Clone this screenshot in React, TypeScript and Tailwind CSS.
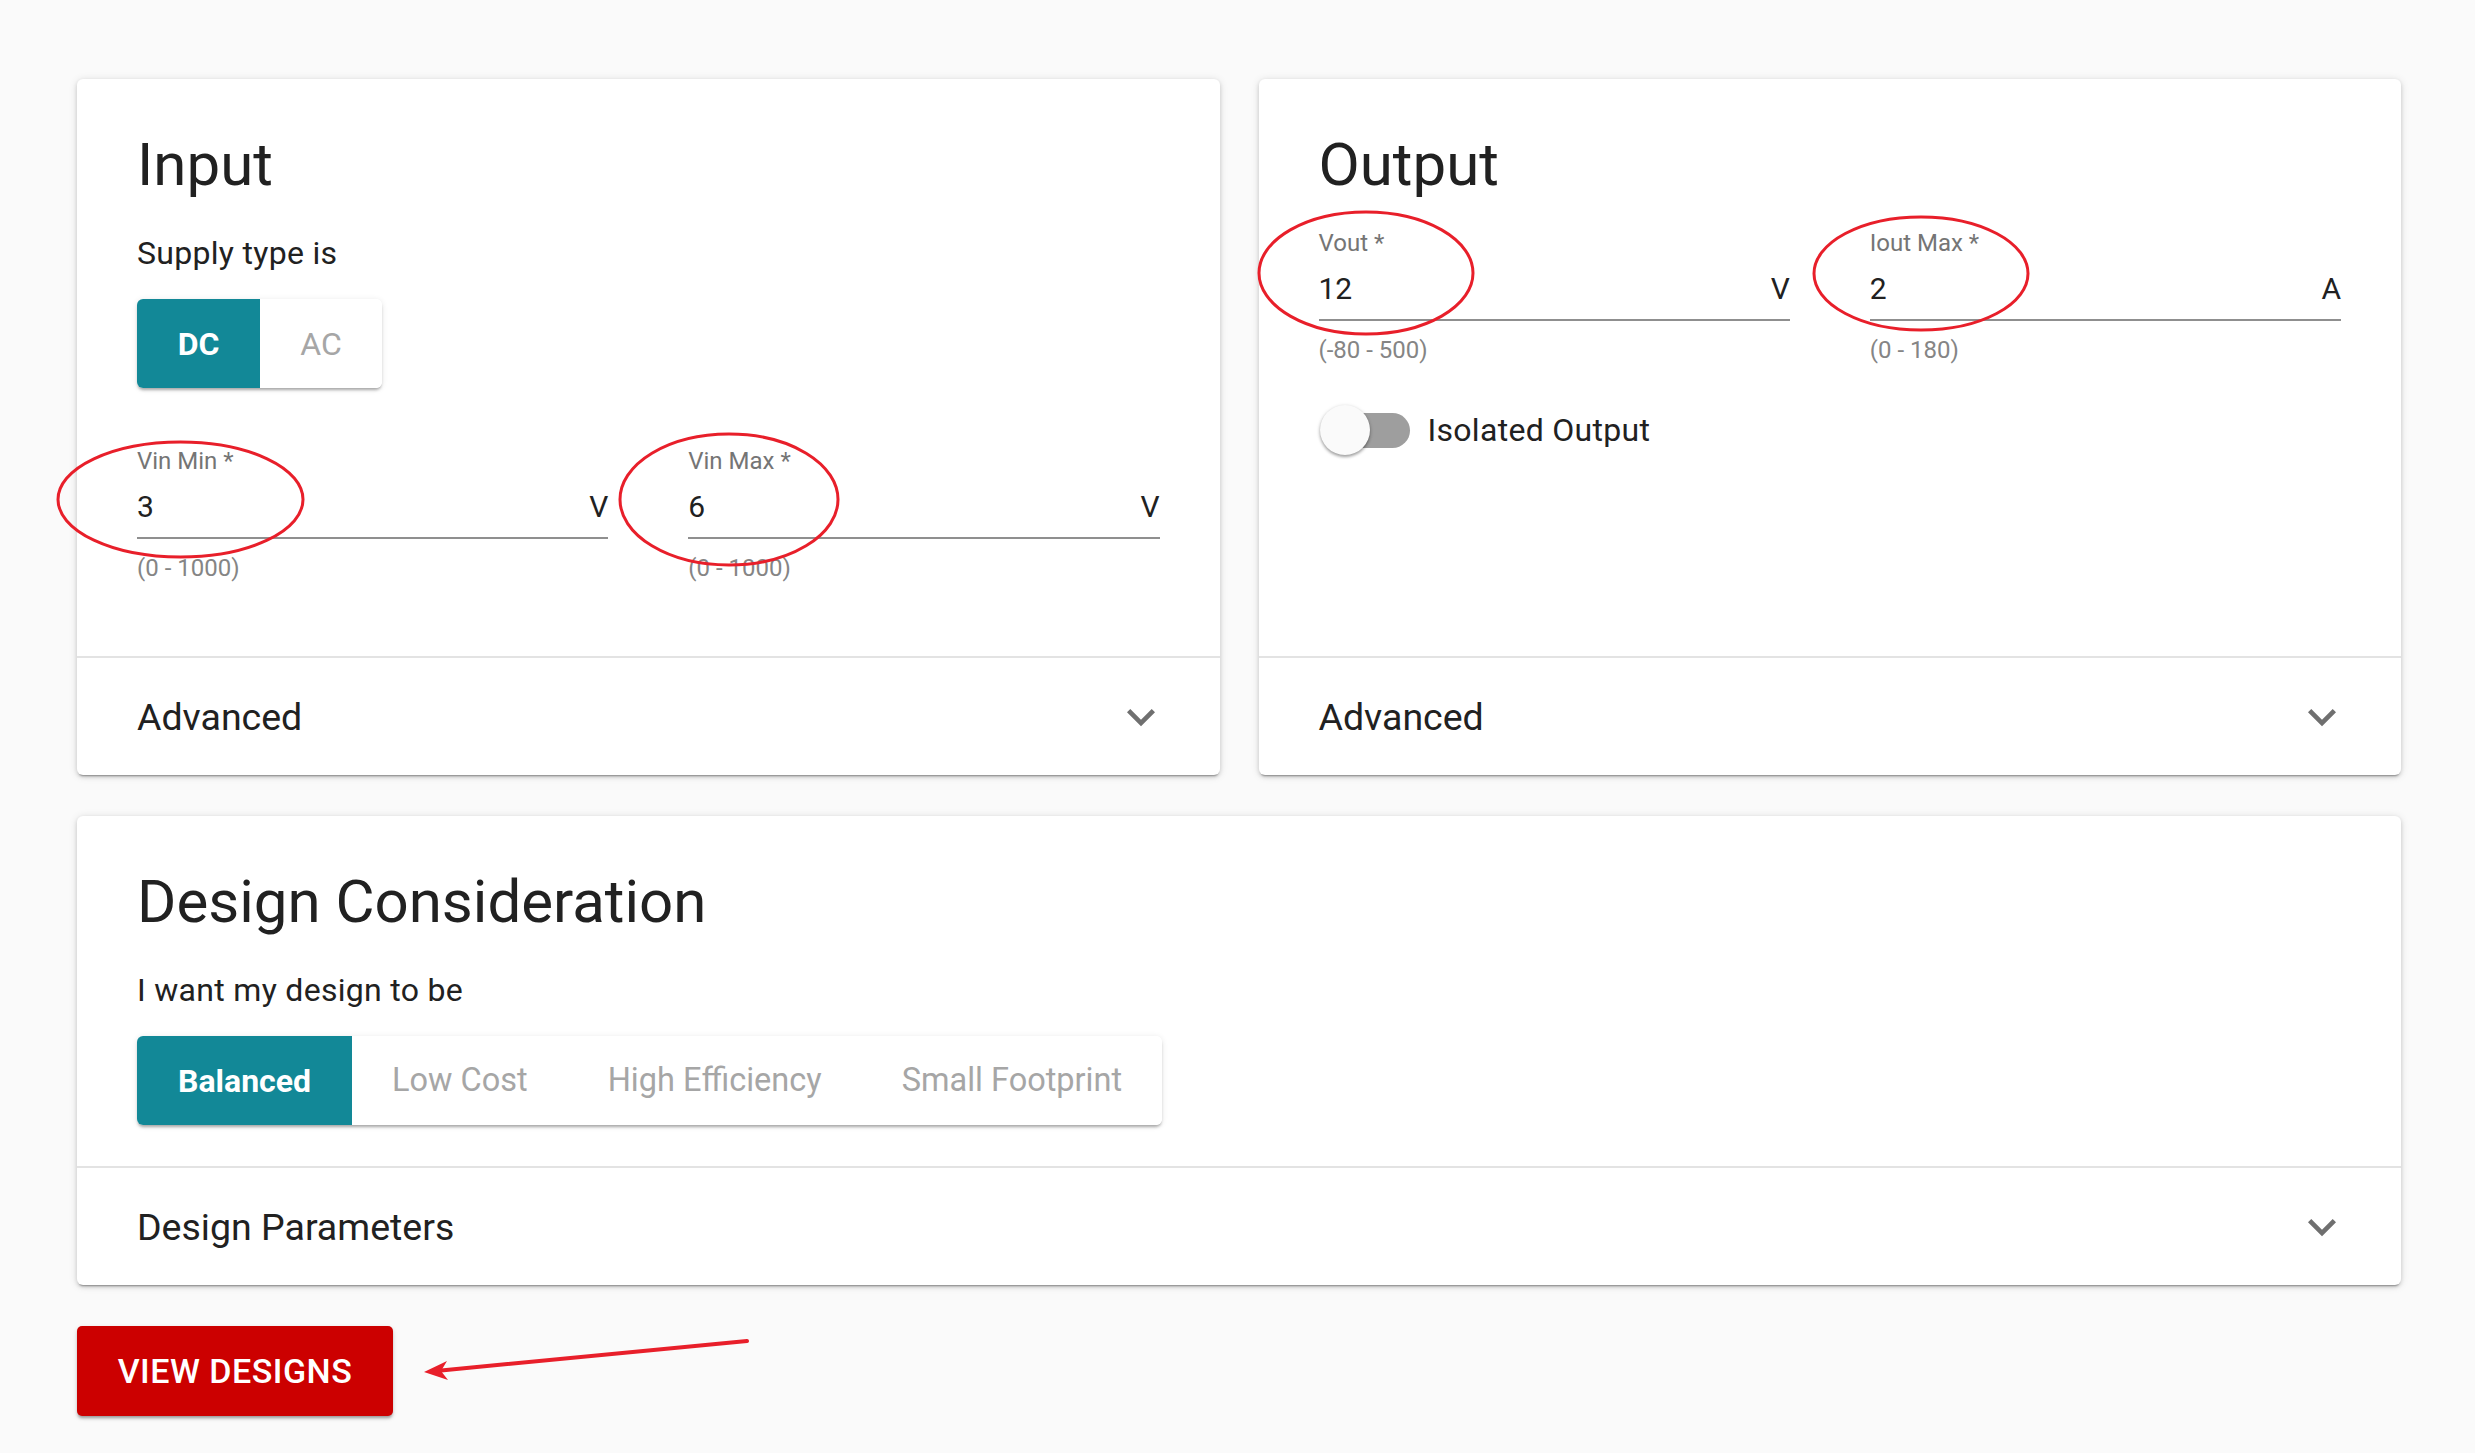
import React from "react";

const cardShadow =
  "shadow-[0_3px_2px_-2px_rgba(0,0,0,0.35),0_2px_4px_0_rgba(0,0,0,0.14),0_1px_9px_0_rgba(0,0,0,0.12)]";

function Chevron() {
  return (
    <svg width="56" height="56" viewBox="0 0 24 24">
      <path d="M16.59 8.59L12 13.17 7.41 8.59 6 10l6 6 6-6z" fill="#6f6f6f" />
    </svg>
  );
}

function Field({ label, value, unit, helper }: { label: string; value: string; unit: string; helper: string }) {
  return (
    <div>
      <div className="text-[24px] leading-[28px] text-[#757575]">{label}</div>
      <div className="mt-[12px] flex items-center justify-between border-b-2 border-[#8f8f8f] pb-[10px] text-[30px] leading-[40px] text-[#212121]">
        <span>{value}</span>
        <span>{unit}</span>
      </div>
      <div className="mt-[15px] text-[24px] leading-[28px] text-[#858585]">{helper}</div>
    </div>
  );
}

function AccordionRow({ title }: { title: string }) {
  return (
    <div className="flex h-[119px] items-center justify-between border-t-2 border-[#e3e3e3] pl-[60px] pr-[51px]">
      <span className="text-[37.5px] leading-[44px] text-[#212121]">{title}</span>
      <Chevron />
    </div>
  );
}

export default function App() {
  const options = ["Balanced", "Low Cost", "High Efficiency", "Small Footprint"];
  return (
    <div className="relative min-h-screen bg-[#fafafa] pt-[79px] pl-[77px] pr-[74px] pb-[37px] font-[Roboto,sans-serif]">
      <div className="grid grid-cols-2 gap-[39px]">
        {/* Input card */}
        <div className={`flex flex-col rounded-[6px] bg-white ${cardShadow}`}>
          <div className="flex-1 px-[60px] pt-[48px] pb-[74px]">
            <h2 className="text-[60px] leading-[76px] font-normal text-[#212121]">Input</h2>
            <p className="mt-[30px] text-[32px] leading-[40px] tracking-[0.3px] text-[#212121]">Supply type is</p>
            <div className="mt-[26px] flex h-[89px] w-fit overflow-hidden rounded-[6px] shadow-[0_3px_3px_-1px_rgba(0,0,0,0.3),0_1px_6px_0_rgba(0,0,0,0.1)]">
              <div className="flex w-[123px] items-center justify-center bg-[#128897] text-[32px] font-bold text-white">DC</div>
              <div className="flex w-[122px] items-center justify-center bg-white text-[32px] text-[#a6a6a6]">AC</div>
            </div>
            <div className="mt-[59px] grid grid-cols-2 gap-[80px]">
              <Field label="Vin Min *" value="3" unit="V" helper="(0 - 1000)" />
              <Field label="Vin Max *" value="6" unit="V" helper="(0 - 1000)" />
            </div>
          </div>
          <AccordionRow title="Advanced" />
        </div>

        {/* Output card */}
        <div className={`flex flex-col rounded-[6px] bg-white ${cardShadow}`}>
          <div className="flex-1 px-[60px] pt-[48px]">
            <h2 className="text-[60px] leading-[76px] font-normal text-[#212121]">Output</h2>
            <div className="mt-[26px] grid grid-cols-2 gap-[80px]">
              <Field label="Vout *" value="12" unit="V" helper="(-80 - 500)" />
              <Field label="Iout Max *" value="2" unit="A" helper="(0 - 180)" />
            </div>
            <div className="mt-[41px] flex items-center">
              <div className="relative h-[50px] w-[91px]">
                <div className="absolute left-[6px] top-[8px] h-[35px] w-[85px] rounded-full bg-[#9e9e9e]" />
                <div className="absolute left-[1px] top-0 h-[50px] w-[50px] rounded-full bg-[#fafafa] shadow-[0_2px_3px_0_rgba(0,0,0,0.3),0_1px_4px_0_rgba(0,0,0,0.15)]" />
              </div>
              <span className="ml-[18px] text-[32px] leading-[40px] tracking-[0.3px] text-[#212121]">Isolated Output</span>
            </div>
          </div>
          <AccordionRow title="Advanced" />
        </div>
      </div>

      {/* Design consideration */}
      <div className={`mt-[41px] flex flex-col rounded-[6px] bg-white ${cardShadow}`}>
        <div className="px-[60px] pt-[48px] pb-[41px]">
          <h2 className="text-[60px] leading-[76px] font-normal text-[#212121]">Design Consideration</h2>
          <p className="mt-[30px] text-[32px] leading-[40px] tracking-[0.3px] text-[#212121]">I want my design to be</p>
          <div className="mt-[26px] flex h-[89px] w-fit overflow-hidden rounded-[6px] shadow-[0_3px_3px_-1px_rgba(0,0,0,0.3),0_1px_6px_0_rgba(0,0,0,0.1)]">
            {options.map((o, i) => (
              <div
                key={o}
                className={
                  i === 0
                    ? "flex items-center justify-center bg-[#128897] px-[41px] text-[32px] font-bold text-white"
                    : "flex items-center justify-center bg-white px-[40px] text-[32.5px] text-[#a6a6a6]"
                }
              >
                {o}
              </div>
            ))}
          </div>
        </div>
        <AccordionRow title="Design Parameters" />
      </div>

      <button className="mt-[41px] flex h-[90px] w-[316px] items-center justify-center rounded-[5px] bg-[#cc0000] text-[34px] font-medium uppercase tracking-[0.5px] text-white shadow-[0_3px_3px_-1px_rgba(0,0,0,0.3),0_2px_5px_0_rgba(0,0,0,0.15)]">
        View Designs
      </button>

      {/* annotations */}
      <svg className="pointer-events-none absolute left-0 top-0" width="2475" height="1453">
        <g fill="none" stroke="#e81f2a" strokeWidth="3">
          <ellipse cx="180.5" cy="499.5" rx="122.5" ry="57.5" />
          <ellipse cx="729" cy="499.5" rx="109" ry="65.5" />
          <ellipse cx="1366" cy="273" rx="107" ry="61" />
          <ellipse cx="1921" cy="273.5" rx="107" ry="56.5" />
        </g>
        <line x1="747" y1="1341" x2="436" y2="1371" stroke="#e81f2a" strokeWidth="4" strokeLinecap="round" />
        <path d="M424 1372 L447 1361 L441 1371 L448 1380 Z" fill="#e81f2a" />
      </svg>
    </div>
  );
}
